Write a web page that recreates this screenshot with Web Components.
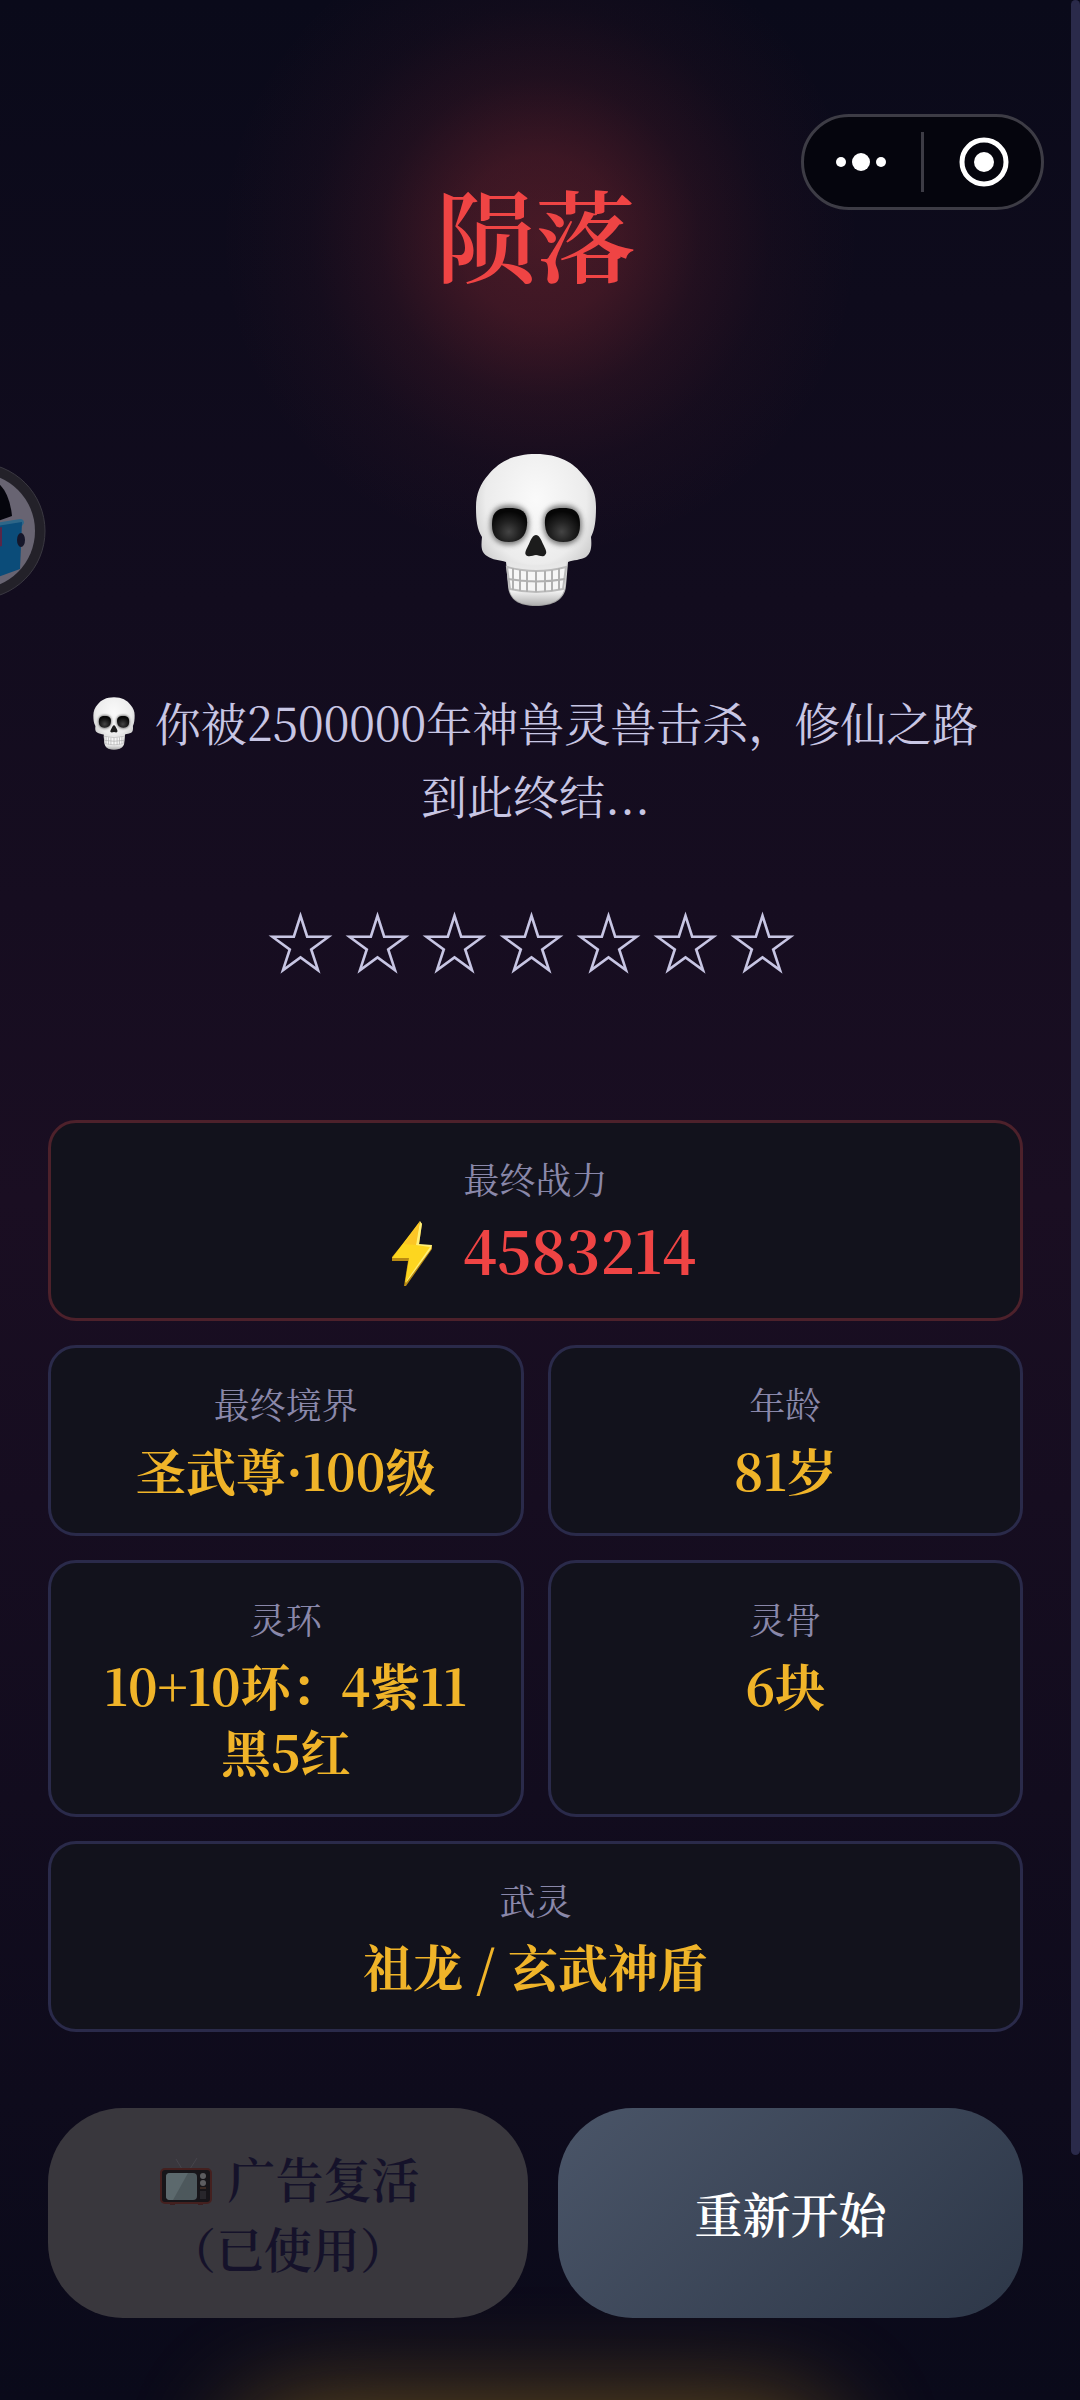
<!DOCTYPE html>
<html lang="zh-CN">
<head>
    <meta charset="utf-8">
    <meta name="viewport" content="width=device-width, initial-scale=1">
    <title>陨落</title>
    <style>
        body {
            margin: 0;
            background: #0a0a18;
            color: #c8c6e4;
            font-family: "Noto Serif CJK SC", "Noto Sans CJK SC", serif;
        }
    </style>
</head>
<body>
    <game-over-page>
        <fall-title slot="title">陨落</fall-title>
        <skull-icon slot="hero" size="large"></skull-icon>
        <story-text slot="story"><skull-icon></skull-icon>你被2500000年神兽灵兽击杀，修仙之路到此终结...</story-text>
        <star-row slot="stars" count="7"></star-row>

        <stat-card slot="stats" wide danger label="最终战力"><bolt-icon></bolt-icon>4583214</stat-card>
        <stat-card slot="stats" label="最终境界">圣武尊·100级</stat-card>
        <stat-card slot="stats" label="年龄">81岁</stat-card>
        <stat-card slot="stats" label="灵环">10+10环：4紫11黑5红</stat-card>
        <stat-card slot="stats" label="灵骨">6块</stat-card>
        <stat-card slot="stats" wide label="武灵">祖龙 / 玄武神盾</stat-card>

        <action-button slot="actions" disabled><tv-icon></tv-icon>广告复活<br>（已使用）</action-button>
        <action-button slot="actions">重新开始</action-button>
    </game-over-page>
    <float-avatar></float-avatar>
    <capsule-menu></capsule-menu>

    <script>
        class GameOverPage extends HTMLElement {
            constructor() {
                super();
                this.attachShadow({ mode: 'open' });
            }

            connectedCallback() {
                this.shadowRoot.innerHTML = `
                    <style>
                        :host {
                            display: flex;
                            height: 100vh;
                            overflow: hidden;
                            background:
                                radial-gradient(circle at 50% 237px, rgba(239, 68, 68, .26) 0, rgba(239, 68, 68, .21) 80px, rgba(239, 68, 68, .09) 160px, rgba(239, 68, 68, .03) 230px, transparent 320px),
                                linear-gradient(#0a0a1a, #1a0e22 50%, #0a0a1a);
                        }

                        main {
                            flex: 1;
                            min-width: 0;
                            padding: 160px 48px 0;
                        }

                        .hero {
                            display: flex;
                            justify-content: center;
                            margin-top: 149px;
                        }

                        .story {
                            margin-top: 78px;
                            padding: 0 38px;
                        }

                        .stars {
                            margin-top: 67px;
                        }

                        .stats {
                            display: grid;
                            grid-template-columns: 1fr 1fr;
                            gap: 24px;
                            margin-top: 138px;
                        }

                        .actions {
                            display: grid;
                            grid-template-columns: 32fr 31fr;
                            gap: 30px;
                            margin-top: 76px;
                        }

                        /* halo of the gold panel that starts under the fold */
                        .panel {
                            height: 160px;
                            margin: 90px 190px 0;
                            border-radius: 60px;
                            box-shadow: 0 0 110px rgba(245, 180, 40, .45);
                        }

                        .scroll {
                            width: 9px;
                            padding-bottom: 245px;
                            display: flex;
                        }

                        .thumb {
                            flex: 1;
                            border-radius: 5px;
                            background: #2a2a4a;
                        }
                    </style>
                    <main>
                        <slot name="title"></slot>
                        <div class="hero"><slot name="hero"></slot></div>
                        <div class="story"><slot name="story"></slot></div>
                        <div class="stars"><slot name="stars"></slot></div>
                        <div class="stats"><slot name="stats"></slot></div>
                        <div class="actions"><slot name="actions"></slot></div>
                        <div class="panel"></div>
                    </main>
                    <div class="scroll"><div class="thumb"></div></div>
                `;
            }
        }

        class FallTitle extends HTMLElement {
            constructor() {
                super();
                this.attachShadow({ mode: 'open' });
            }

            connectedCallback() {
                this.shadowRoot.innerHTML = `
                    <style>
                        :host {
                            display: block;
                            text-align: center;
                        }

                        h1 {
                            margin: 0;
                            color: #ef4444;
                            font-size: 100px;
                            font-weight: 600;
                            line-height: 144px;
                        }
                    </style>
                    <h1><slot></slot></h1>
                `;
            }
        }

        class StoryText extends HTMLElement {
            constructor() {
                super();
                this.attachShadow({ mode: 'open' });
            }

            connectedCallback() {
                this.shadowRoot.innerHTML = `
                    <style>
                        :host {
                            display: block;
                            text-align: center;
                        }

                        p {
                            margin: 0;
                            font-size: 46px;
                            font-weight: 400;
                            line-height: 73px;
                        }
                    </style>
                    <p><slot></slot></p>
                `;
            }
        }

        class StarRow extends HTMLElement {
            constructor() {
                super();
                this.attachShadow({ mode: 'open' });
            }

            connectedCallback() {
                const count = Number(this.getAttribute('count'));
                this.shadowRoot.innerHTML = `
                    <style>
                        :host {
                            display: flex;
                            justify-content: center;
                            font-size: 69px;
                            line-height: 84px;
                        }

                        span {
                            margin-right: 8px;
                        }
                    </style>
                    ${'<span>☆</span>'.repeat(count)}
                `;
            }
        }

        class StatCard extends HTMLElement {
            constructor() {
                super();
                this.attachShadow({ mode: 'open' });
            }

            connectedCallback() {
                this.shadowRoot.innerHTML = `
                    <style>
                        :host {
                            display: flex;
                            flex-direction: column;
                            gap: 6px;
                            padding: 29px 36px 31px;
                            border: 3px solid #2a2a4a;
                            border-radius: 28px;
                            background: #12121c;
                            text-align: center;
                        }

                        :host([wide]) {
                            grid-column: 1 / -1;
                        }

                        :host([danger]) {
                            border-color: #4d212b;
                        }

                        .label {
                            color: #8a88aa;
                            font-size: 36px;
                            font-weight: 400;
                            line-height: 53px;
                        }

                        .value {
                            color: #f0b429;
                            font-size: 50px;
                            font-weight: 700;
                            line-height: 66px;
                        }

                        :host([danger]) .value {
                            color: #ef4444;
                            font-size: 58px;
                            line-height: 76px;
                        }
                    </style>
                    <div class="label">${this.getAttribute('label')}</div>
                    <div class="value"><slot></slot></div>
                `;
            }
        }

        class ActionButton extends HTMLElement {
            constructor() {
                super();
                this.attachShadow({ mode: 'open' });
            }

            connectedCallback() {
                this.shadowRoot.innerHTML = `
                    <style>
                        :host {
                            display: flex;
                        }

                        button {
                            flex: 1;
                            padding: 35px 24px;
                            border: 0;
                            border-radius: 75px;
                            background: linear-gradient(135deg, #4a5568, #2d3748);
                            color: #fff;
                            font: inherit;
                            font-size: 48px;
                            font-weight: 600;
                            line-height: 70px;
                            cursor: pointer;
                        }

                        button:disabled {
                            background: #39373d;
                            color: #15122a;
                            font-weight: 600;
                            cursor: default;
                        }
                    </style>
                    <button type="button" ${this.hasAttribute('disabled') ? 'disabled' : ''}><slot></slot></button>
                `;
            }
        }

        class SkullIcon extends HTMLElement {
            constructor() {
                super();
                this.attachShadow({ mode: 'open' });
            }

            connectedCallback() {
                this.shadowRoot.innerHTML = `
                    <style>
                        :host {
                            display: inline-block;
                            width: 42px;
                            margin-right: 20px;
                            vertical-align: -9px;
                            line-height: 0;
                        }

                        :host([size="large"]) {
                            width: 122px;
                            margin-right: 0;
                        }

                        svg {
                            width: 100%;
                        }
                    </style>
                    <svg viewBox="0 0 122 154" role="img" aria-label="骷髅">
                        <defs>
                            <radialGradient id="bone" cx=".5" cy=".3" r=".7">
                                <stop offset="0" stop-color="#fafafa"/>
                                <stop offset=".6" stop-color="#ececec"/>
                                <stop offset=".85" stop-color="#c9c9c9"/>
                                <stop offset="1" stop-color="#9c9c9c"/>
                            </radialGradient>
                            <radialGradient id="eye" cx=".48" cy=".7" r=".6">
                                <stop offset="0" stop-color="#444"/>
                                <stop offset=".5" stop-color="#222"/>
                                <stop offset="1" stop-color="#060606"/>
                            </radialGradient>
                            <linearGradient id="jaw" x2="0" y2="1">
                                <stop offset="0" stop-color="#e4e4e4"/>
                                <stop offset=".7" stop-color="#f2f2f2"/>
                                <stop offset="1" stop-color="#b0b0b0"/>
                            </linearGradient>
                            <filter id="soft" x="-30%" y="-30%" width="160%" height="160%"><feGaussianBlur stdDeviation="2.5"/></filter>
                        </defs>
                        <path fill="url(#bone)" d="M61 1C84 1 99 10 108 22C118 33 121 42 121 54C121 67 120 76 116 84C117 94 116 100 111 104C106 107 98 107 93 109L91 133C90 147 78 153 61 153C44 153 34 147 33 133L31 109C25 107 17 107 12 103C6 99 6 94 7 84C2 76 1 67 1 54C1 41 5 31 14 21C24 9 38 1 61 1Z"/>
                        <path fill="url(#jaw)" d="M32 106Q61 119 91 106L90 133C88 147 77 152 61 152C45 152 35 147 34 133Z"/>
                        <g fill="#555" opacity=".75" filter="url(#soft)">
                            <path d="M34 52C48 52 55 59 54 72C53 86 45 92 34 92C22 92 15 85 15 72C15 58 22 52 34 52Z"/>
                            <path d="M88 52C74 52 67 59 68 72C69 86 77 92 88 92C100 92 107 85 107 72C107 58 100 52 88 52Z"/>
                        </g>
                        <g fill="url(#eye)">
                            <path d="M34 55C48 55 53 60 52 72C51 84 44 89 34 89C22 89 17 83 17 72C17 59 22 55 34 55Z"/>
                            <path d="M88 55C74 55 69 60 70 72C71 84 78 89 88 89C100 89 105 83 105 72C105 59 100 55 88 55Z"/>
                        </g>
                        <path fill="#1c1c1c" d="M61 82C64 82 66 86 68 91C70 95 73 100 70 102C68 105 64 102 61 102C58 102 54 105 51 102C49 100 52 95 54 91C56 86 58 82 61 82Z"/>
                        <path fill="#f6f6f6" stroke="#bbb" stroke-width="2" d="M32 114Q61 122 91 114L88 136Q61 142 35 136Z"/>
                        <path fill="none" stroke="#b0b0b0" stroke-width="2" d="M33 126Q61 131 90 126M38 115V137M45 117V138M52 118V139M61 118V139M70 118V139M77 117V138M84 115V137"/>
                    </svg>
                `;
            }
        }

        class BoltIcon extends HTMLElement {
            constructor() {
                super();
                this.attachShadow({ mode: 'open' });
            }

            connectedCallback() {
                this.shadowRoot.innerHTML = `
                    <style>
                        :host {
                            display: inline-block;
                            width: 42px;
                            margin: 0 30px 0 16px;
                            vertical-align: -12px;
                            line-height: 0;
                        }
                    </style>
                    <svg viewBox="0 0 42 66" width="42" height="66" role="img" aria-label="闪电">
                        <path fill="#b98a12" d="M28 4L31 3L28 25L41 25V29L15 66H13L17 41L1 41V37Z"/>
                        <path fill="#fff07a" d="M29 1L31 4L28 24L41 25L40 29L15 63Z"/>
                        <path fill="#fdd61f" d="M29 1L25 25L39 27L14 63L18 38L1 38Z"/>
                        <path fill="#fbb92b" opacity=".55" d="M29 1L25 25L13 24Z"/>
                    </svg>
                `;
            }
        }

        class TvIcon extends HTMLElement {
            constructor() {
                super();
                this.attachShadow({ mode: 'open' });
            }

            connectedCallback() {
                this.shadowRoot.innerHTML = `
                    <style>
                        :host {
                            display: inline-block;
                            width: 52px;
                            margin: 0 15px 0 4px;
                            vertical-align: -8px;
                            line-height: 0;
                        }
                    </style>
                    <svg viewBox="0 0 52 48" width="52" height="48" role="img" aria-label="电视">
                        <path fill="none" stroke="#46444b" d="M22 11L16 1M30 11L37 0"/>
                        <path fill="#3b1e20" d="M10 44H15V47H10ZM38 44H43V47H38Z"/>
                        <rect x="1" y="11" width="50" height="34" rx="4" fill="#171519" stroke="#44201f" stroke-width="2"/>
                        <rect x="6" y="15" width="31" height="27" rx="4" fill="#4d585c"/>
                        <path fill="#5c696d" d="M10 15H28L13 42H10Q6 42 6 38V19Q6 15 10 15Z"/>
                        <circle cx="43" cy="18" r="3" fill="#5d5d60"/>
                        <circle cx="43" cy="25" r="3" fill="#5d5d60"/>
                        <path stroke="#61402f" d="M40 30H46"/>
                        <rect x="40" y="33" width="6" height="8" fill="#28262b"/>
                    </svg>
                `;
            }
        }

        class CapsuleMenu extends HTMLElement {
            constructor() {
                super();
                this.attachShadow({ mode: 'open' });
            }

            connectedCallback() {
                this.shadowRoot.innerHTML = `
                    <style>
                        :host {
                            position: absolute;
                            top: 114px;
                            right: 36px;
                            display: flex;
                            align-items: center;
                            box-sizing: border-box;
                            width: 243px;
                            height: 96px;
                            border: 3px solid #3d3c45;
                            border-radius: 48px;
                            background: #05050d;
                        }

                        button {
                            flex: 1;
                            height: 100%;
                            padding: 0;
                            border: 0;
                            background: none;
                            line-height: 0;
                        }

                        i {
                            width: 3px;
                            height: 60px;
                            background: #3d3c45;
                        }
                    </style>
                    <button type="button" aria-label="更多">
                        <svg width="56" height="52" viewBox="0 0 56 52" fill="#fff">
                            <circle cx="6" cy="26" r="5"/>
                            <circle cx="26" cy="26" r="9"/>
                            <circle cx="46" cy="26" r="5"/>
                        </svg>
                    </button>
                    <i></i>
                    <button type="button" aria-label="关闭">
                        <svg width="52" height="52" viewBox="0 0 52 52">
                            <circle cx="27" cy="26" r="22" fill="none" stroke="#fff" stroke-width="5"/>
                            <circle cx="27" cy="26" r="10" fill="#fff"/>
                        </svg>
                    </button>
                `;
            }
        }

        class FloatAvatar extends HTMLElement {
            constructor() {
                super();
                this.attachShadow({ mode: 'open' });
            }

            connectedCallback() {
                this.shadowRoot.innerHTML = `
                    <style>
                        :host {
                            position: absolute;
                            top: 462px;
                            left: 0;
                            line-height: 0;
                        }
                    </style>
                    <svg width="46" height="138" viewBox="0 0 46 138" role="img" aria-label="头像">
                        <circle cx="-23" cy="69" r="68" fill="#232129" stroke="#3a3841"/>
                        <circle cx="-23" cy="69" r="58" fill="#686472"/>
                        <path fill="#05050c" d="M-10 16Q9 24 12 54L-10 62Z"/>
                        <path fill="#2d6688" d="M-10 62L20 57Q24 57 24 61L22 64L-10 72Z"/>
                        <path fill="#0b4c79" d="M-10 65L22 60L20 107L-10 118Z"/>
                        <path fill="#592647" d="M-8 67L2 65V84L-8 86Z"/>
                        <ellipse cx="21" cy="78" rx="4" ry="7" fill="#15162a"/>
                    </svg>
                `;
            }
        }

        customElements.define('game-over-page', GameOverPage);
        customElements.define('fall-title', FallTitle);
        customElements.define('story-text', StoryText);
        customElements.define('star-row', StarRow);
        customElements.define('stat-card', StatCard);
        customElements.define('action-button', ActionButton);
        customElements.define('skull-icon', SkullIcon);
        customElements.define('bolt-icon', BoltIcon);
        customElements.define('tv-icon', TvIcon);
        customElements.define('capsule-menu', CapsuleMenu);
        customElements.define('float-avatar', FloatAvatar);
    </script>
</body>
</html>
